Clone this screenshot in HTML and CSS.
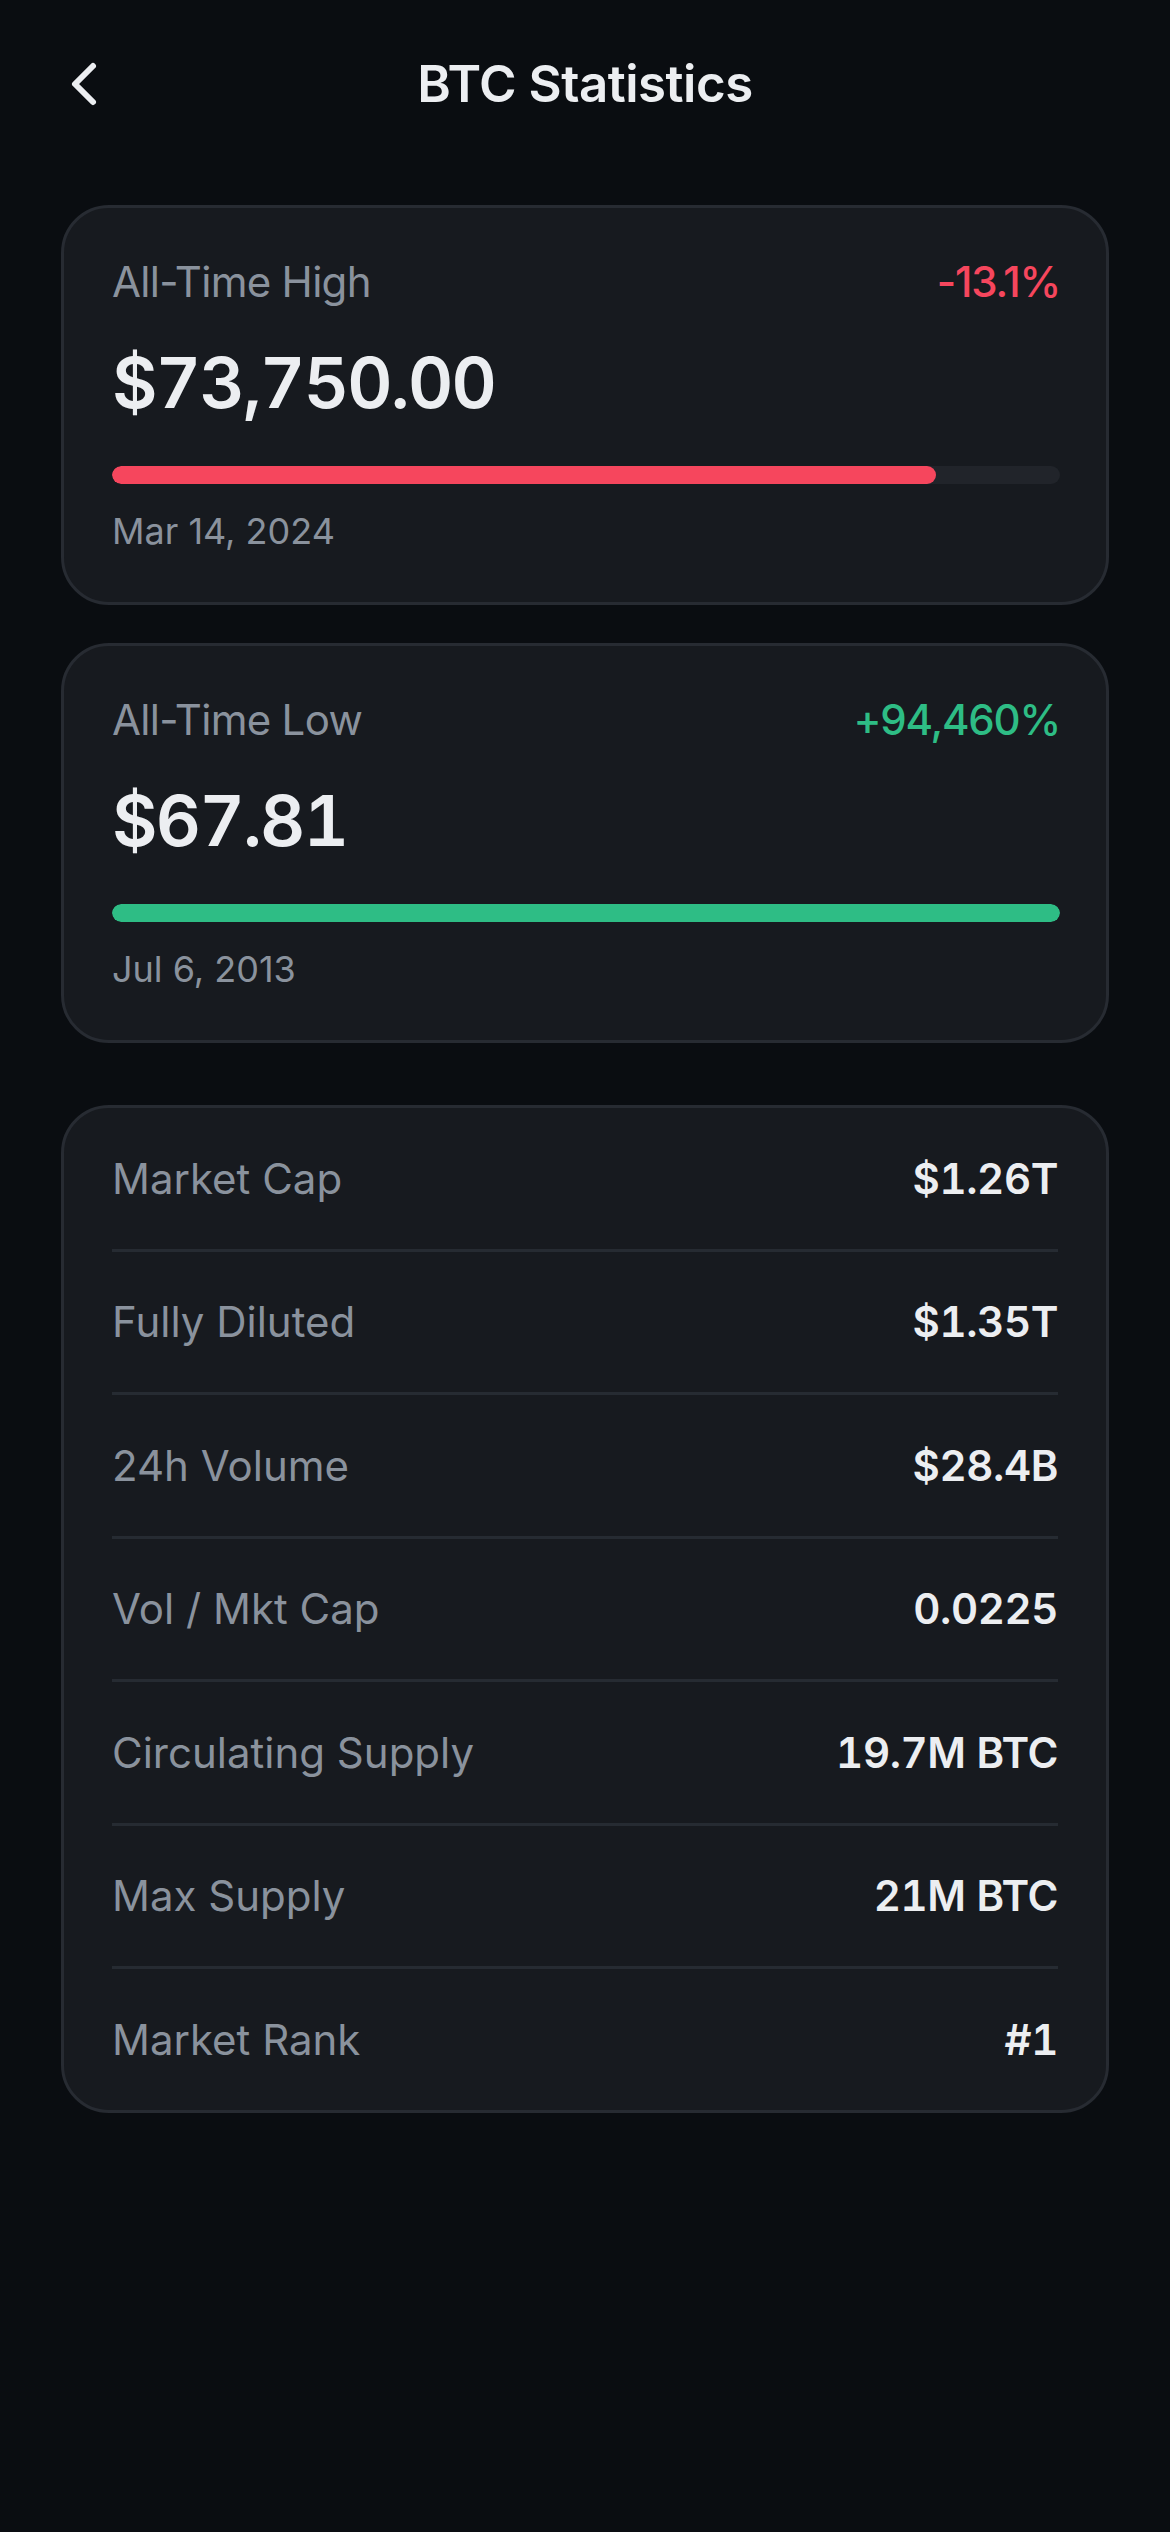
FILE: index.html
```html
<!DOCTYPE html>
<html lang="en">
  <head>
    <meta charset="UTF-8" />
    <meta name="viewport" content="width=device-width, initial-scale=1.0" />
    <title>BTC Statistics</title>
    <link rel="stylesheet" href="styles.css">
  </head>
  <body>
    <!-- Top bar -->
    <header class="topbar">
      <a href="#" class="back" aria-label="Back">
        <svg viewBox="0 0 24 24" width="72" height="72" fill="none" stroke="currentColor" stroke-width="2" stroke-linecap="round" stroke-linejoin="round">
          <path d="M15 18l-6-6 6-6" />
        </svg>
      </a>
      <h1 class="title">BTC Statistics</h1>
      <span></span>
    </header>

    <main class="content">
      <!-- All-time extremes -->
      <section class="card extreme">
        <div class="card-head">
          <span class="label">All-Time High</span>
          <span class="change down">-13.1%</span>
        </div>
        <div class="price">$73,750.00</div>
        <div class="track"><div class="fill down" style="width: 86.9%"></div></div>
        <div class="date">Mar 14, 2024</div>
      </section>

      <section class="card extreme">
        <div class="card-head">
          <span class="label">All-Time Low</span>
          <span class="change up">+94,460%</span>
        </div>
        <div class="price">$67.81</div>
        <div class="track"><div class="fill up" style="width: 100%"></div></div>
        <div class="date">Jul 6, 2013</div>
      </section>

      <!-- Market stats -->
      <section class="card stats">
        <div class="row"><span class="label">Market Cap</span><span class="value">$1.26T</span></div>
        <div class="row"><span class="label">Fully Diluted</span><span class="value">$1.35T</span></div>
        <div class="row"><span class="label">24h Volume</span><span class="value">$28.4B</span></div>
        <div class="row"><span class="label">Vol / Mkt Cap</span><span class="value">0.0225</span></div>
        <div class="row"><span class="label">Circulating Supply</span><span class="value">19.7M BTC</span></div>
        <div class="row"><span class="label">Max Supply</span><span class="value">21M BTC</span></div>
        <div class="row"><span class="label">Market Rank</span><span class="value">#1</span></div>
      </section>
    </main>
  </body>
</html>
```

FILE: styles.css
```css
/* General */
* {
  box-sizing: border-box;
  margin: 0;
  padding: 0;
}

body {
  font-family: Inter, "Noto Sans", sans-serif;
  background-color: #0a0d11;
  color: #eceef1;
  min-height: 2532px;
}

/* Top bar */
.topbar {
  display: grid;
  grid-template-columns: 72px 1fr 72px;
  align-items: center;
  padding: 48px 48px 0;
  height: 120px;
}

.back {
  display: flex;
  color: #eceef1;
}

.title {
  text-align: center;
  font-size: 51px;
  font-weight: 600;
  line-height: 72px;
  letter-spacing: -0.5px;
}

/* Cards */
.content {
  display: flex;
  flex-direction: column;
  gap: 38px;
  padding: 85px 61px 0;
}

.card {
  background: #171a1f;
  border: 3px solid #272b32;
  border-radius: 48px;
}

.extreme {
  padding: 48px 46px 48px 48px;
}

.card-head {
  display: flex;
  justify-content: space-between;
  line-height: 51px;
}

.label {
  font-size: 42px;
  color: #8a929d;
}

.card-head .label {
  letter-spacing: -0.7px;
}

.change {
  font-size: 42px;
  font-weight: 500;
  letter-spacing: -1.2px;
}

.change.down {
  color: #f6465d;
}

.change.up {
  color: #2ebd85;
}

.price {
  margin-top: 32px;
  font-size: 70px;
  font-weight: 600;
  line-height: 87px;
  font-variant-numeric: tabular-nums;
  letter-spacing: -1.7px;
}

.track {
  margin-top: 40px;
  height: 18px;
  border-radius: 9px;
  background: #21242a;
  overflow: hidden;
}

.fill {
  height: 100%;
  border-radius: 9px;
}

.fill.down {
  background: #f6465d;
}

.fill.up {
  background: #2ebd85;
}

.date {
  margin-top: 25px;
  font-size: 36px;
  line-height: 45px;
  color: #8a929d;
}

/* Stats list */
.stats {
  margin-top: 24px;
  padding: 0 48px;
}

.row {
  display: flex;
  justify-content: space-between;
  align-items: center;
  height: 143.5px;
  border-bottom: 3px solid #262b32;
}

.row:last-child {
  height: 140.5px;
  border-bottom: none;
}

.value {
  font-size: 42px;
  font-weight: 600;
  font-variant-numeric: tabular-nums;
  letter-spacing: -0.4px;
  color: #eceef1;
}
```
